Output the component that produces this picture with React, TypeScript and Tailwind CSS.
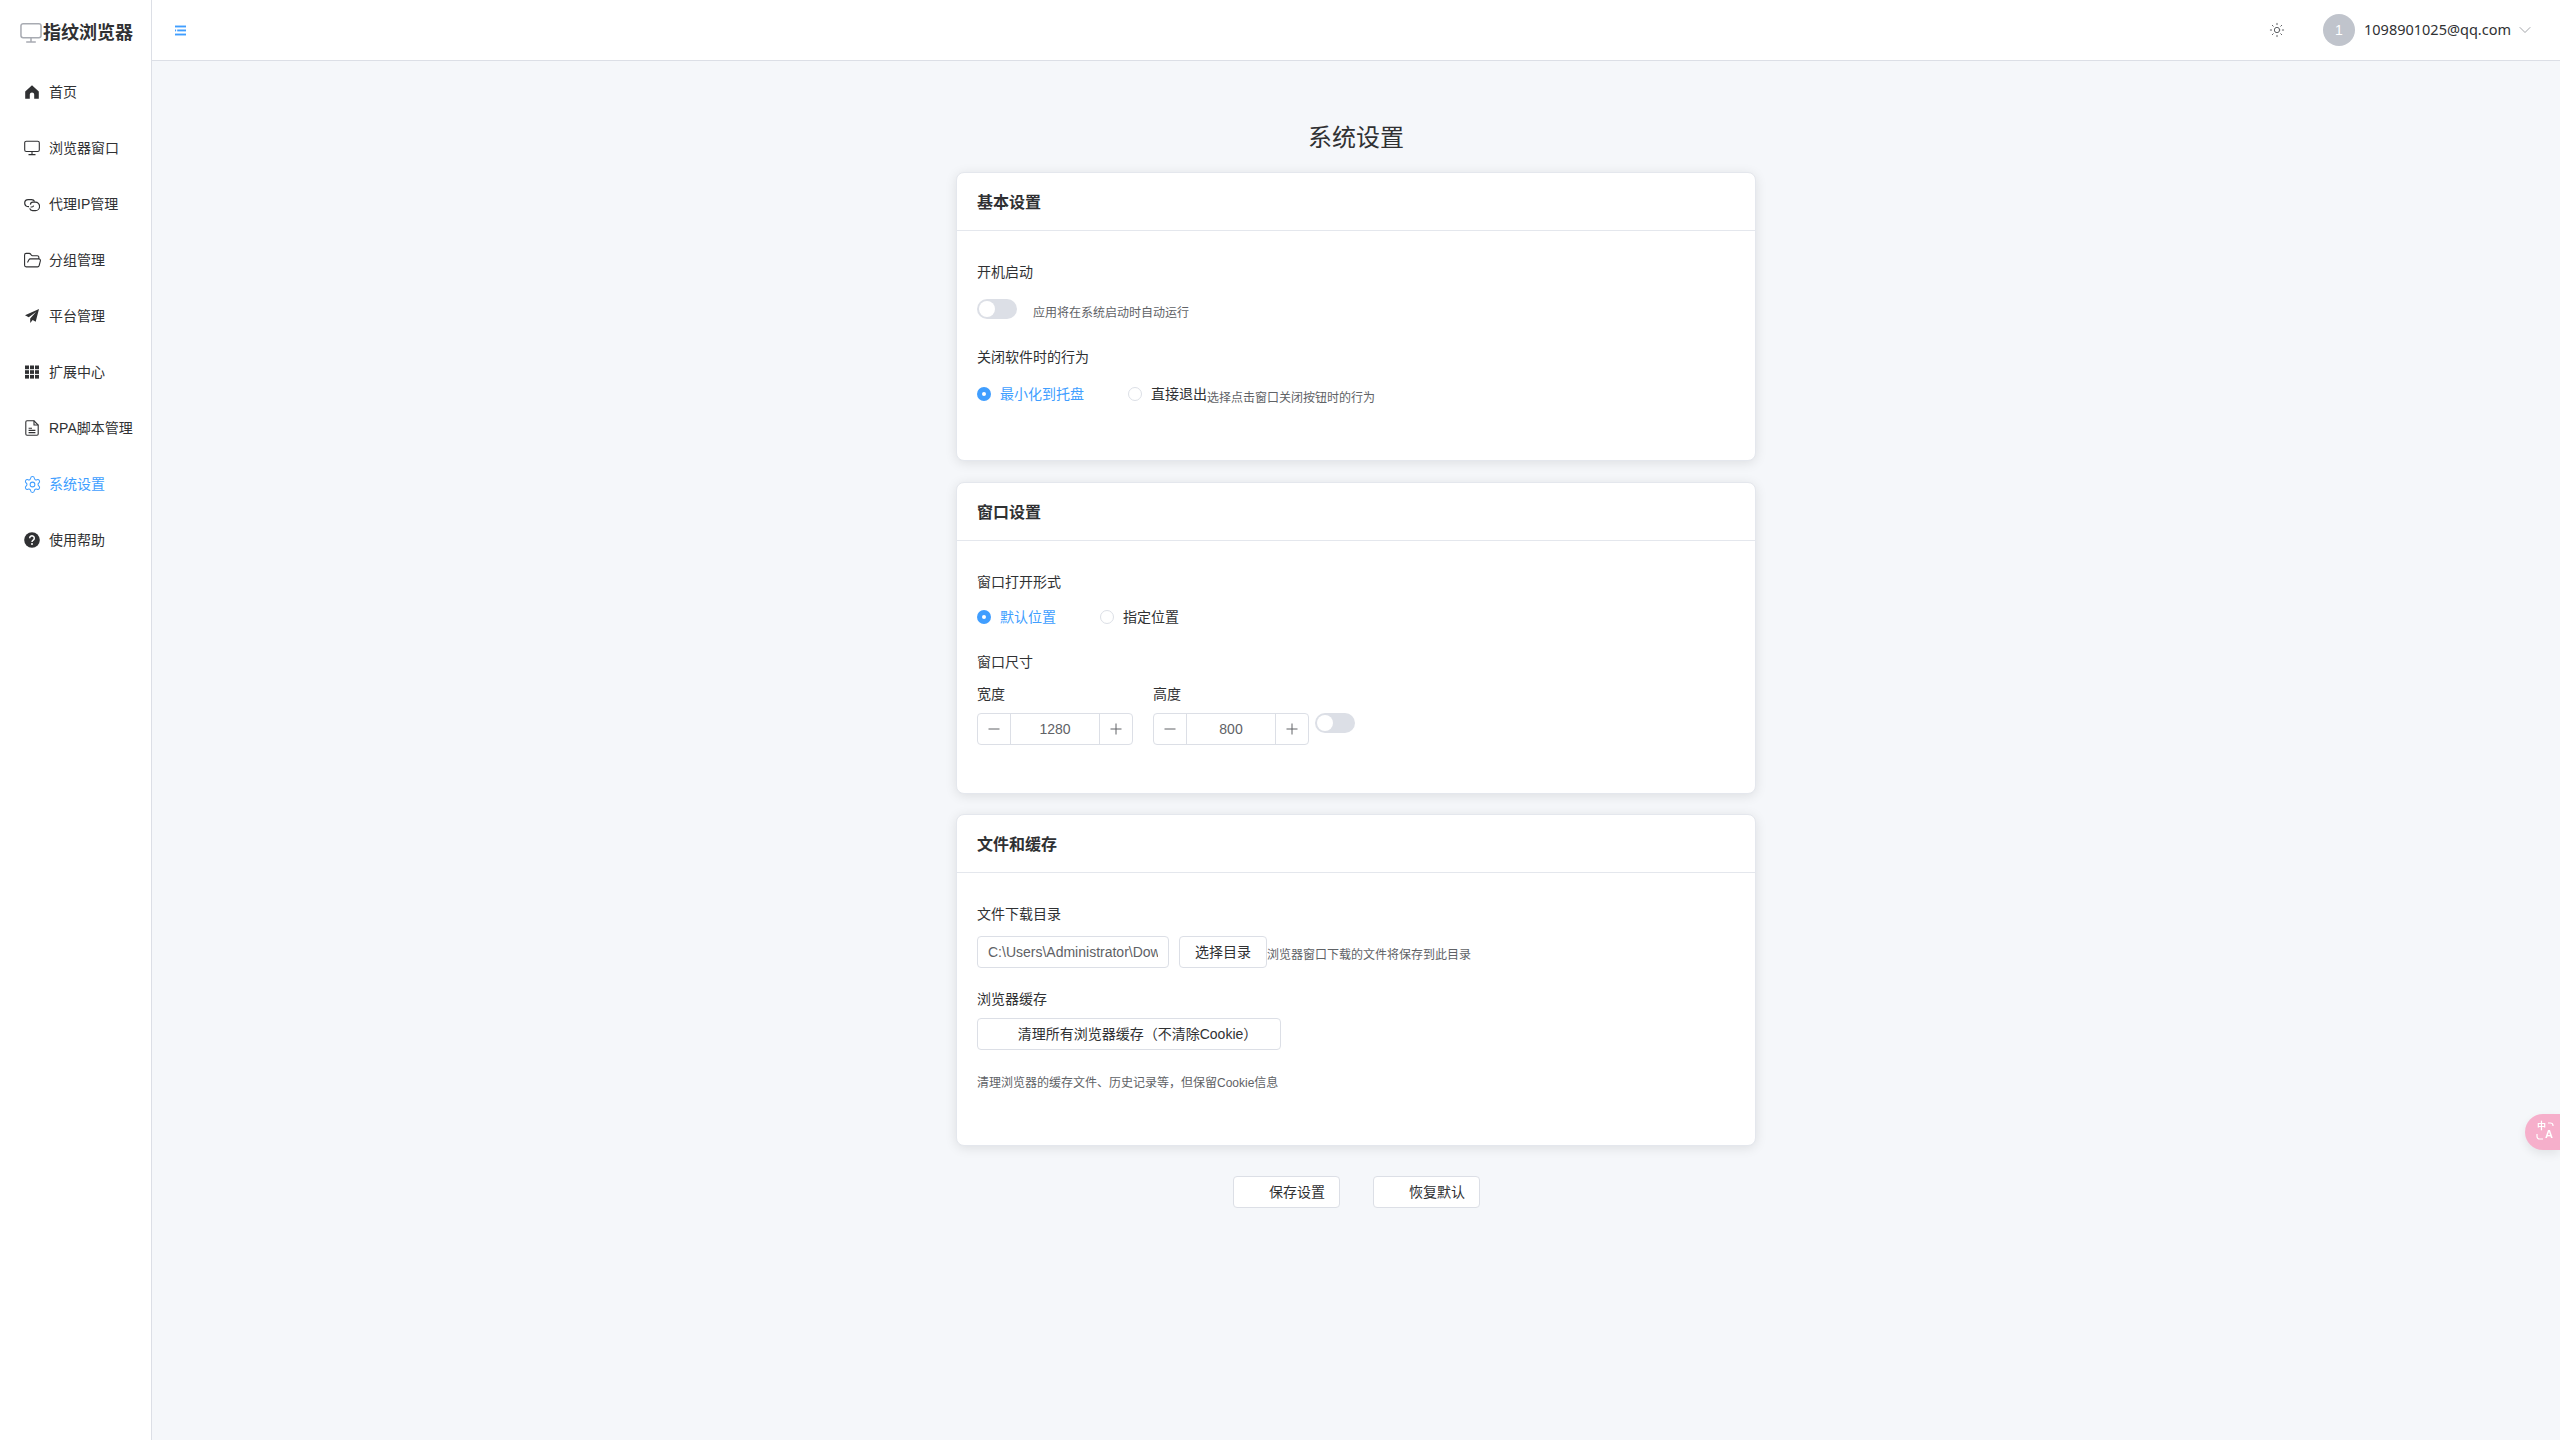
import { ChevronDown, FolderOpen, Settings, Sun } from "lucide-react";
import type { ReactNode } from "react";

function MonitorIcon({ className }: { className?: string }) {
  return (
    <svg viewBox="0 0 16 16" fill="none" stroke="currentColor" strokeWidth="1.1" className={className}>
      <rect x="0.7" y="1.2" width="14.6" height="10.3" rx="1.6" />
      <path d="M8 11.5v2.8M4.5 14.6h7" />
    </svg>
  );
}

function HomeIcon() {
  return (
    <svg viewBox="0 0 16 16" fill="currentColor" className="w-4 h-4">
      <path d="M8 1.2 1.2 7.4v7.4h4.6v-4.2a2.2 2.2 0 0 1 4.4 0v4.2h4.6V7.4z" />
    </svg>
  );
}

function LinkIcon() {
  return (
    <svg viewBox="0 0 16 16" fill="none" stroke="currentColor" strokeWidth="1.2" className="w-4 h-4">
      <path d="M5 10.6H4.2A3.4 3.4 0 0 1 4.2 3.6h3.4a3.4 3.4 0 0 1 3 2" />
      <path d="M6.4 8.6a2.6 2.6 0 0 1 2.4-2.4h2.6a3.8 3.8 0 0 1 0 8.4H8.6a3 3 0 0 1-2.9-2.2" />
      <path d="M9.6 9.6a1.8 1.8 0 0 1-1.7 1.4H6.6" />
    </svg>
  );
}

function SendIcon() {
  return (
    <svg viewBox="0 0 16 16" fill="currentColor" className="w-4 h-4">
      <path d="M15 1 1 7.2l3.7 2.1L12 4 6.2 10.4V15l2.5-3 3 1.7z" />
    </svg>
  );
}

function GridIcon() {
  return (
    <svg viewBox="0 0 16 16" fill="currentColor" className="w-4 h-4">
      <rect x="1" y="1.5" width="4" height="3.7" />
      <rect x="6" y="1.5" width="4" height="3.7" />
      <rect x="11" y="1.5" width="4" height="3.7" />
      <rect x="1" y="6.2" width="4" height="3.7" />
      <rect x="6" y="6.2" width="4" height="3.7" />
      <rect x="11" y="6.2" width="4" height="3.7" />
      <rect x="1" y="10.9" width="4" height="3.7" />
      <rect x="6" y="10.9" width="4" height="3.7" />
      <rect x="11" y="10.9" width="4" height="3.7" />
    </svg>
  );
}

function DocIcon() {
  return (
    <svg viewBox="0 0 16 16" fill="none" stroke="currentColor" strokeWidth="1.1" className="w-4 h-4">
      <path d="M10 0.8H3a1.2 1.2 0 0 0-1.2 1.2v12a1.2 1.2 0 0 0 1.2 1.2h10a1.2 1.2 0 0 0 1.2-1.2V5z" />
      <path d="M10 0.8V5h4.2M4.6 8.2h3.4M4.6 10.4h6.8M4.6 12.6h6.8" />
    </svg>
  );
}

function HelpIcon() {
  return (
    <svg viewBox="0 0 16 16" className="w-4 h-4">
      <circle cx="8" cy="8" r="7.8" fill="currentColor" />
      <path d="M5.7 6.2a2.3 2.3 0 1 1 3.6 1.9C8.5 8.7 8 9 8 10" fill="none" stroke="#fff" strokeWidth="1.5" />
      <circle cx="8" cy="12" r="1" fill="#fff" />
    </svg>
  );
}

const navItems: { label: string; icon: ReactNode; active?: boolean }[] = [
  { label: "首页", icon: <HomeIcon /> },
  { label: "浏览器窗口", icon: <MonitorIcon className="w-4 h-4" /> },
  { label: "代理IP管理", icon: <LinkIcon /> },
  { label: "分组管理", icon: <FolderOpen className="w-[19px] h-[19px] -m-[1.5px]" strokeWidth={1.4} /> },
  { label: "平台管理", icon: <SendIcon /> },
  { label: "扩展中心", icon: <GridIcon /> },
  { label: "RPA脚本管理", icon: <DocIcon /> },
  { label: "系统设置", icon: <Settings className="w-[19px] h-[19px] -m-[1.5px]" strokeWidth={1.3} />, active: true },
  { label: "使用帮助", icon: <HelpIcon /> },
];

function Card({ title, children, className }: { title: string; children: ReactNode; className?: string }) {
  return (
    <section className={`w-[800px] bg-white rounded-[8px] border border-[#e4e7ed] shadow-[0_2px_12px_rgba(0,0,0,0.1)] ${className ?? ""}`}>
      <h2 className="h-[58px] pt-0.5 flex items-center px-5 border-b border-[#e4e7ed] text-base font-bold text-[#303133]">{title}</h2>
      {children}
    </section>
  );
}

function Label({ children, className }: { children: ReactNode; className?: string }) {
  return <div className={`h-[22px] leading-[22px] text-sm text-[#303133] ${className ?? ""}`}>{children}</div>;
}

function Toggle({ className }: { className?: string }) {
  return (
    <span className={`inline-block w-10 h-5 rounded-full bg-[#dcdfe6] p-0.5 shrink-0 ${className ?? ""}`}>
      <span className="block w-4 h-4 rounded-full bg-white" />
    </span>
  );
}

function Radio({ label, checked, className }: { label: string; checked?: boolean; className?: string }) {
  return (
    <label className={`flex items-center gap-[9px] h-5 text-sm ${checked ? "text-[#409eff]" : "text-[#303133]"} ${className ?? ""}`}>
      {checked ? (
        <span className="w-[14px] h-[14px] rounded-full bg-[#409eff] flex items-center justify-center">
          <span className="w-1 h-1 rounded-full bg-white" />
        </span>
      ) : (
        <span className="w-[14px] h-[14px] rounded-full bg-white border border-[#dcdfe6]" />
      )}
      {label}
    </label>
  );
}

function NumberInput({ value }: { value: string }) {
  return (
    <div className="w-[156px] h-8 flex border border-[#dcdfe6] rounded-[4px] bg-white text-sm text-[#606266]">
      <span className="w-[33px] flex items-center justify-center border-r border-[#dcdfe6] text-[#606266]">
        <svg viewBox="0 0 12 12" className="w-3 h-3" stroke="currentColor"><path d="M0.5 6h11" /></svg>
      </span>
      <span className="flex-1 flex items-center justify-center">{value}</span>
      <span className="w-[33px] flex items-center justify-center border-l border-[#dcdfe6] text-[#606266]">
        <svg viewBox="0 0 12 12" className="w-3 h-3" stroke="currentColor"><path d="M0.5 6h11M6 0.5v11" /></svg>
      </span>
    </div>
  );
}

function Hint({ children, className }: { children: ReactNode; className?: string }) {
  return <span className={`text-xs leading-[18px] text-[#606266] whitespace-nowrap ${className ?? ""}`}>{children}</span>;
}

export default function App() {
  return (
    <div className="flex h-screen bg-[#f5f7fa] text-[#303133] font-['Liberation_Sans','Noto_Sans_CJK_SC',sans-serif] overflow-hidden">
      <aside className="w-[152px] shrink-0 bg-white border-r border-[#dcdfe6]">
        <div className="h-[64px] flex items-center pl-5 pt-0.5">
          <MonitorIcon className="w-[22px] h-[22px] text-[#a8abb2] shrink-0" />
          <span className="ml-px text-lg font-bold text-[#303133] whitespace-nowrap">指纹浏览器</span>
        </div>
        <nav className="flex flex-col">
          {navItems.map((item) => (
            <a
              key={item.label}
              className={`h-14 flex items-center gap-[9px] pl-6 text-sm whitespace-nowrap ${item.active ? "text-[#409eff]" : "text-[#303133]"}`}
            >
              {item.icon}
              {item.label}
            </a>
          ))}
        </nav>
      </aside>

      <div className="flex-1 flex flex-col min-w-0">
        <header className="h-[61px] shrink-0 bg-white border-b border-[#dcdfe6] flex items-center pl-[23px] pr-[25px]">
          <svg viewBox="0 0 10 10" className="w-[11px] h-[11px] text-[#409eff]" fill="currentColor">
            <rect x="0" y="0.5" width="10" height="1.7" />
            <rect x="2" y="4.1" width="8" height="1.7" />
            <rect x="0" y="4.1" width="1" height="1.7" />
            <rect x="0" y="7.8" width="10" height="1.7" />
          </svg>
          <Sun className="w-4 h-4 ml-auto text-[#606266]" strokeWidth={1.5} />
          <span className="w-8 h-8 ml-[38px] rounded-full bg-[#c0c4cc] text-white text-sm flex items-center justify-center">1</span>
          <span className="ml-[9px] w-[146px] font-['Noto_Sans','Liberation_Sans',sans-serif] text-[14.5px] text-[#303133] whitespace-nowrap">1098901025@qq.com</span>
          <ChevronDown className="w-5 h-5 ml-[5px] text-[#909399]" strokeWidth={1} />
        </header>

        <main className="flex-1 flex flex-col items-center pt-[61px]">
          <h1 className="h-8 leading-8 text-2xl font-normal text-[#303133] mb-[18px]">系统设置</h1>

          <Card title="基本设置">
            <div className="px-5 pt-[30px] pb-[53px]">
              <Label>开机启动</Label>
              <div className="flex items-start mt-4">
                <Toggle />
                <Hint className="ml-4 mt-[5px]">应用将在系统启动时自动运行</Hint>
              </div>
              <Label className="mt-6">关闭软件时的行为</Label>
              <div className="flex items-start mt-4">
                <Radio label="最小化到托盘" checked />
                <Radio label="直接退出" className="ml-[44px]" />
                <Hint className="mt-[5px]">选择点击窗口关闭按钮时的行为</Hint>
              </div>
            </div>
          </Card>

          <Card title="窗口设置" className="mt-[21px]">
            <div className="px-5 pt-[30px] pb-[48px]">
              <Label>窗口打开形式</Label>
              <div className="flex mt-[14px]">
                <Radio label="默认位置" checked />
                <Radio label="指定位置" className="ml-[44px]" />
              </div>
              <Label className="mt-6">窗口尺寸</Label>
              <div className="flex items-start mt-2.5">
                <div>
                  <Label>宽度</Label>
                  <div className="mt-2"><NumberInput value="1280" /></div>
                </div>
                <div className="ml-5">
                  <Label>高度</Label>
                  <div className="mt-2"><NumberInput value="800" /></div>
                </div>
                <Toggle className="ml-[6px] mt-[30px]" />
              </div>
            </div>
          </Card>

          <Card title="文件和缓存" className="mt-5">
            <div className="px-5 pt-[30px] pb-[54px]">
              <Label>文件下载目录</Label>
              <div className="flex items-start mt-[11px]">
                <input
                  readOnly
                  value="C:\Users\Administrator\Downloads"
                  className="w-[192px] h-8 px-[10px] border border-[#dcdfe6] rounded-[4px] text-sm text-[#606266] outline-none"
                />
                <button className="w-[88px] h-8 ml-[10px] border border-[#dcdfe6] rounded-[4px] bg-white text-sm text-[#303133]">选择目录</button>
                <Hint className="mt-[10px]">浏览器窗口下载的文件将保存到此目录</Hint>
              </div>
              <Label className="mt-5">浏览器缓存</Label>
              <button className="block w-[304px] h-8 mt-2 pl-[17px] border border-[#dcdfe6] rounded-[4px] bg-white text-sm text-[#303133]">清理所有浏览器缓存（不清除Cookie）</button>
              <div className="mt-[23px] h-[18px] leading-[18px]">
                <Hint>清理浏览器的缓存文件、历史记录等，但保留Cookie信息</Hint>
              </div>
            </div>
          </Card>

          <div className="flex gap-[33px] mt-[30px]">
            <button className="w-[107px] h-8 pl-[22px] border border-[#dcdfe6] rounded-[4px] bg-white text-sm text-[#303133]">保存设置</button>
            <button className="w-[107px] h-8 pl-[22px] border border-[#dcdfe6] rounded-[4px] bg-white text-sm text-[#303133]">恢复默认</button>
          </div>
        </main>
      </div>

      {/* translate widget stuck on the right edge */}
      <div className="fixed right-0 top-[1114px] w-[35px] h-9 rounded-l-[18px] bg-[#f6afcb] shadow-[0_4px_10px_rgba(0,0,0,0.08)] text-white">
        <span className="absolute left-[12px] top-[8px] text-[9px] leading-[9px] font-bold">中</span>
        <span className="absolute left-[20px] top-[15px] text-[11px] leading-[11px] font-bold">A</span>
        <svg viewBox="0 0 18 18" fill="none" stroke="currentColor" strokeWidth="1.2" className="absolute left-[11px] top-[8px] w-[18px] h-[18px]">
          <path d="M12 1h2.5A2.5 2.5 0 0 1 17 3.5V4" />
          <path d="M1 12v2.5A2.5 2.5 0 0 0 3.5 17H7" />
        </svg>
      </div>
    </div>
  );
}
